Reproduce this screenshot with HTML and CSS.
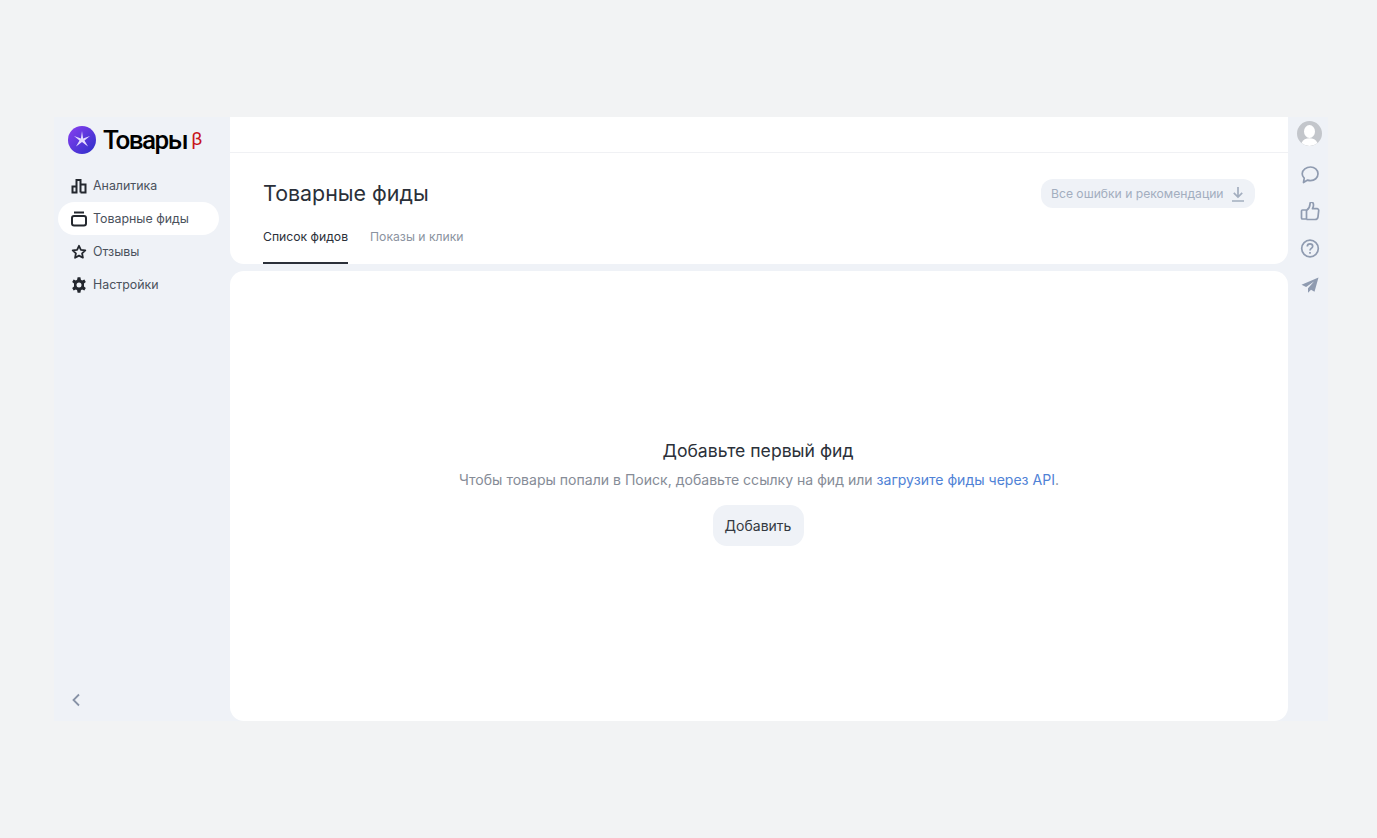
FILE: index.html
```html
<!DOCTYPE html>
<html lang="ru">

<head>
  <meta charset="UTF-8">
  <meta name="viewport" content="width=device-width, initial-scale=1.0">
  <title>Товарные фиды</title>
  <link rel="stylesheet" href="styles.css">
</head>

<body>
  <div class="app">
    <aside class="sidebar">
      <div class="logo">
        <svg class="logo_icon" width="28" height="28" viewBox="0 0 28 28">
          <defs>
            <linearGradient id="logo_grad" x1="0" y1="0" x2="1" y2="1">
              <stop offset="0" stop-color="#8a3ff0" />
              <stop offset="1" stop-color="#2b2fc8" />
            </linearGradient>
          </defs>
          <circle cx="14" cy="14" r="14" fill="url(#logo_grad)" />
          <path d="M14 5l1.100 7.400 6.900-2.400-5.500 4.400 3.500 6.100-6-4.600-6 4.600 3.500-6.100L6 10l6.900 2.400z" fill="#e4dcff" />
        </svg>
        <span class="logo_text">Товары</span>
        <span class="logo_beta">β</span>
      </div>

      <nav class="menu">
        <a class="menu_item">
          <svg width="16" height="16" viewBox="0 0 16 16" fill="none" stroke="#23272e" stroke-width="2">
            <path d="M1.500 8.500h4v6h-4zM5.500 14.500V2h4v12.500M9.500 6.500h5v8h-5" />
          </svg>
          Аналитика
        </a>
        <a class="menu_item active">
          <svg width="16" height="16" viewBox="0 0 16 16" fill="none" stroke="#23272e" stroke-width="2">
            <path d="M3 1.500h10" />
            <rect x="1" y="5" width="14" height="9.500" rx="2" />
          </svg>
          Товарные фиды
        </a>
        <a class="menu_item">
          <svg width="16" height="16" viewBox="0 0 16 16" fill="none" stroke="#23272e" stroke-width="1.800" stroke-linejoin="round">
            <path d="M8 1.800l1.900 4 4.400.5-3.200 3 .8 4.400L8 11.600l-3.900 2.100.8-4.400-3.200-3 4.400-.5z" />
          </svg>
          Отзывы
        </a>
        <a class="menu_item">
          <svg width="16" height="16" viewBox="0 0 16 16">
            <path fill="#23272e" fill-rule="evenodd" d="M6.600.3h2.800l.5 2.400 1.200.7 2.300-.8 1.400 2.400L13 6.600v2.800l1.800 1.600-1.400 2.400-2.300-.8-1.200.7-.5 2.400H6.600l-.5-2.400-1.200-.7-2.300.8L1.200 11 3 9.400V6.600L1.200 5l1.400-2.400 2.300.8 1.200-.7zM8 5.500a2.500 2.500 0 1 0 0 5 2.500 2.500 0 0 0 0-5z" />
          </svg>
          Настройки
        </a>
      </nav>

      <button type="button" class="collapse_btn">
        <svg width="10" height="14" viewBox="0 0 10 14" fill="none" stroke="#8792a6" stroke-width="1.800">
          <path d="M8 1.500L2.500 7 8 12.500" />
        </svg>
      </button>
    </aside>

    <main class="content">
      <div class="head_card">
        <div class="top_strip"></div>
        <div class="title_row">
          <h1 class="title">Товарные фиды</h1>
          <button type="button" class="errors_btn">
            Все ошибки и рекомендации
            <svg width="14" height="16" viewBox="0 0 14 16" fill="none" stroke="#a3aebf" stroke-width="1.700">
              <path d="M7 1v9.500M2.800 6.800L7 11l4.200-4.200M1 15h12" />
            </svg>
          </button>
        </div>
        <div class="tabs">
          <a class="tab active">Список фидов</a>
          <a class="tab">Показы и клики</a>
        </div>
      </div>

      <div class="empty_card">
        <h2 class="empty_title">Добавьте первый фид</h2>
        <p class="empty_text">Чтобы товары попали в Поиск, добавьте ссылку на фид или <a class="empty_link">загрузите фиды через API</a>.</p>
        <button type="button" class="add_btn">Добавить</button>
      </div>
    </main>

    <aside class="rail">
      <svg class="avatar" width="25" height="25" viewBox="0 0 25 25">
        <circle cx="12.500" cy="12.500" r="12.500" fill="#c3c6cb" />
        <ellipse cx="12.500" cy="10.500" rx="5.500" ry="6.500" fill="#fff" />
        <path d="M4.500 22c1.500-3.500 4.500-4.800 8-4.800s6.500 1.300 8 4.800a12.500 12.500 0 0 1-16 0z" fill="#fff" />
      </svg>
      <svg width="20" height="20" viewBox="0 0 20 20" fill="none" stroke="#8f9bb0" stroke-width="1.700" stroke-linejoin="round">
        <path d="M10.500 2c4 0 7.500 2.700 7.500 6.800s-3.500 6.800-7.500 6.800c-1 0-2-.2-2.900-.5L3.500 17.500l.7-4.400C3 12 2.200 10.500 2.200 8.800 2.200 4.700 6.500 2 10.500 2z" />
      </svg>
      <svg width="20" height="20" viewBox="0 0 20 20" fill="none" stroke="#8f9bb0" stroke-width="1.700" stroke-linejoin="round">
        <path d="M6.500 8h-4c-.6 0-1 .4-1 1v7c0 .6.400 1 1 1h4zM6.500 8.500c2-1.500 3.500-4 3.500-6.500 0-1 .5-1.800 1.500-1.800 1.300 0 2 1.200 2 2.800 0 1.200-.4 2.500-1 3.700h4.500c1 0 1.800.8 1.700 1.900l-.7 6.300c-.2 1.500-1.200 2.600-3 2.600H6.500" />
      </svg>
      <svg width="20" height="20" viewBox="0 0 20 20" fill="none" stroke="#8f9bb0" stroke-width="1.700">
        <circle cx="10" cy="9.500" r="8.300" />
        <path d="M7.300 7.400c0-1.600 1.200-2.600 2.700-2.600s2.700 1 2.700 2.400c0 2.200-2.700 2.200-2.700 4.300" />
        <path d="M10 13.100v1.700" />
      </svg>
      <svg width="20" height="20" viewBox="0 0 20 20">
        <path d="M18.500 1.500L1.500 8.800l4.600 2.300L14 5.500l-6 6.700v4.500l3-3 3.500 2z" fill="#8f9bb0" />
      </svg>
    </aside>
  </div>
</body>

</html>
```

FILE: styles.css
```css
* {
  box-sizing: border-box;
  margin: 0;
  padding: 0;
}

body {
  background-color: #f2f3f4;
  font-family: Inter, "Noto Sans", sans-serif;
  color: #2b3039;

  height: 838px;
  padding: 117px 0 0 54px;
  overflow: hidden;
}

.app {
  width: 1274px;
  height: 604px;

  display: flex;

  background-color: #eff2f7;
}

.sidebar {
  width: 176px;
  padding: 9px 11px 0 4px;

  display: flex;
  flex-direction: column;
}

.logo {
  height: 28px;
  margin-left: 10px;

  display: flex;
  align-items: center;
}

.logo_icon {
  flex-shrink: 0;
}

.logo_text {
  font-family: Roboto, sans-serif;
  font-size: 26px;
  font-weight: 500;
  letter-spacing: -1.500px;
  color: #000;
  margin-left: 7px;
}

.logo_beta {
  font-family: Roboto, sans-serif;
  font-size: 19px;
  color: #c8151b;
  margin-left: 4px;
  margin-top: -3px;
}

.menu {
  margin-top: 15px;

  display: flex;
  flex-direction: column;
}

.menu_item {
  height: 33px;
  padding-left: 13px;
  border-radius: 17px;

  display: flex;
  align-items: center;
  gap: 6px;

  font-size: 12.400px;
  color: #4a515c;
}

.menu_item.active {
  background-color: #fff;
}

.collapse_btn {
  width: 20px;
  height: 20px;
  margin-top: auto;
  margin-bottom: 11px;
  margin-left: 8px;

  display: flex;
  align-items: center;
  justify-content: center;

  border: none;
  background: none;
}

.content {
  width: 1058px;

  display: flex;
  flex-direction: column;
  gap: 7px;
}

.head_card {
  height: 147px;
  background-color: #fff;
  border-radius: 0 0 14px 14px;
}

.top_strip {
  height: 36px;
  border-bottom: 1px solid #f0f1f4;
}

.title_row {
  height: 56px;
  padding: 24px 33px 0;

  display: flex;
  justify-content: space-between;
  align-items: flex-start;
}

.title {
  font-size: 21.400px;
  font-weight: 400;
  line-height: 33px;
  color: #2b3039;
}

.errors_btn {
  width: 214px;
  height: 29px;
  margin-top: 2px;
  padding: 0 10px 0 10px;
  border: none;
  border-radius: 12px;

  display: flex;
  align-items: center;
  justify-content: space-between;

  font-family: inherit;
  font-size: 12.150px;
  white-space: nowrap;
  color: #a3aebf;
  background-color: #eff2f7;
}

.tabs {
  height: 55px;
  padding: 0 33px;

  display: flex;
  gap: 22px;
}

.tab {
  height: 55px;
  padding-top: 19px;
  line-height: 18px;

  font-size: 12.200px;
  color: #8b93a0;
}

.tab.active {
  color: #2b3039;
  border-bottom: 2px solid #2b3039;
}

.empty_card {
  flex: 1;
  padding-top: 168px;
  background-color: #fff;
  border-radius: 14px;

  display: flex;
  flex-direction: column;
  align-items: center;
}

.empty_title {
  font-size: 17.600px;
  font-weight: 400;
  line-height: 24px;
  margin-right: 2px;
}

.empty_text {
  margin-top: 6px;
  font-size: 14.050px;
  line-height: 22px;
  color: #868c97;
}

.empty_link {
  color: #4f82d6;
}

.add_btn {
  width: 91px;
  height: 41px;
  margin-top: 14px;
  margin-right: 2px;
  border: none;
  border-radius: 14px;

  font-family: inherit;
  font-size: 14px;
  color: #343941;
  background-color: #eff2f7;
}

.rail {
  width: 40px;
  padding: 4px 0 0 4px;

  display: flex;
  flex-direction: column;
  align-items: center;
  gap: 17px;
}

.avatar {
  margin-bottom: 2px;
  margin-right: 2px;
}
```
